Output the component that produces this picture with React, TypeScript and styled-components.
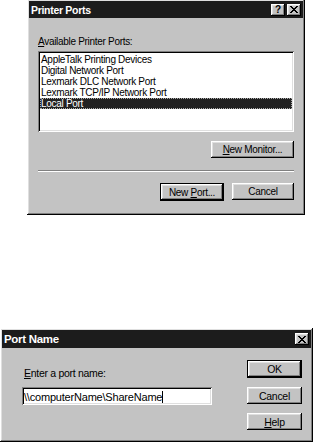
import React from 'react';
import styled, { createGlobalStyle, css } from 'styled-components';

const GlobalStyle = createGlobalStyle`
  html, body {
    margin: 0;
    padding: 0;
    background: #fff;
  }
  body {
    font-family: 'Liberation Sans', Arial, sans-serif;
    color: #000;
  }
`;

const FACE = '#c3c3c3';

const raised = css`
  box-shadow: inset -1px -1px #000, inset 1px 1px #fff, inset -2px -2px #808080,
    inset 2px 2px #dfdfdf;
`;

const sunken = css`
  box-shadow: inset 1px 1px #808080, inset -1px -1px #fff, inset 2px 2px #000,
    inset -2px -2px #dfdfdf;
`;

const Page = styled.div`
  width: 315px;
  height: 442px;
  display: flex;
  flex-direction: column;
  justify-content: space-between;
  overflow: hidden;
`;

const Window = styled.div<{ $width: number; $height: number; $left: number; $top: number }>`
  box-sizing: border-box;
  width: ${(p) => p.$width}px;
  height: ${(p) => p.$height}px;
  margin-left: ${(p) => p.$left}px;
  margin-top: ${(p) => p.$top}px;
  padding: 2px;
  background: ${FACE};
  display: flex;
  flex-direction: column;
  ${raised};
`;

const TitleBar = styled.div<{ $height: number }>`
  height: ${(p) => p.$height}px;
  background: #1c1c1c;
  display: flex;
  align-items: center;
  padding: 0 2px 0 2px;
  gap: 2px;
`;

const TitleText = styled.span<{ $size: number }>`
  flex: 1;
  color: #fff;
  font-weight: bold;
  font-size: ${(p) => p.$size}px;
  letter-spacing: -0.3px;
  white-space: nowrap;
`;

const TitleButton = styled.div`
  box-sizing: border-box;
  width: 14px;
  height: 12px;
  background: ${FACE};
  display: flex;
  align-items: center;
  justify-content: center;
  font-size: 10px;
  font-weight: bold;
  line-height: 1;
  ${raised};
`;

const Body = styled.div<{ $pad: string; $size: number }>`
  flex: 1;
  display: flex;
  flex-direction: column;
  padding: ${(p) => p.$pad};
  font-size: ${(p) => p.$size}px;
  letter-spacing: -0.3px;
`;

const Label = styled.div<{ $indent?: number }>`
  line-height: 12px;
  margin-left: ${(p) => p.$indent ?? 0}px;
  white-space: nowrap;
`;

const ListBox = styled.div`
  box-sizing: border-box;
  margin-top: 3px;
  height: 81px;
  background: #fff;
  padding: 3px 2px 2px;
  ${sunken};
`;

const ListItem = styled.div<{ $selected?: boolean }>`
  box-sizing: border-box;
  height: 11px;
  line-height: 11px;
  padding-left: 1px;
  white-space: nowrap;
  ${(p) =>
    p.$selected &&
    css`
      background: #222;
      color: #fff;
      outline: 1px dotted #aaa;
      outline-offset: -1px;
    `}
`;

const Row = styled.div<{ $top: number }>`
  display: flex;
  justify-content: flex-end;
  gap: 8px;
  margin-top: ${(p) => p.$top}px;
`;

const Button = styled.div<{ $width: number; $default?: boolean }>`
  box-sizing: border-box;
  width: ${(p) => p.$width}px;
  height: ${(p) => (p.$default ? 18 : 17)}px;
  display: flex;
  align-items: center;
  justify-content: center;
  background: ${FACE};
  white-space: pre;
  ${raised};
  ${(p) =>
    p.$default &&
    css`
      border: 1px solid #000;
    `}
`;

const Caption = styled.span`
  white-space: pre;
`;

const Groove = styled.div`
  margin-top: 12px;
  height: 1px;
  background: #808080;
  border-bottom: 1px solid #fff;
`;

const Key = styled.span`
  text-decoration: underline;
`;

const FormGrid = styled.div`
  display: grid;
  grid-template-columns: 1fr 55px;
  column-gap: 35px;
`;

const Column = styled.div<{ $top: number; $gap?: number }>`
  display: flex;
  flex-direction: column;
  gap: ${(p) => p.$gap ?? 0}px;
  padding-top: ${(p) => p.$top}px;
`;

const TextField = styled.div<{ $indent: number }>`
  box-sizing: border-box;
  margin-top: 8px;
  margin-left: ${(p) => p.$indent}px;
  height: 18px;
  background: #fff;
  padding: 2px 2px 0;
  font-size: 11px;
  line-height: 14px;
  letter-spacing: -0.2px;
  white-space: nowrap;
  display: flex;
  align-items: center;
  ${sunken};
`;

const Caret = styled.span`
  display: inline-block;
  width: 1px;
  height: 12px;
  background: #000;
`;

const CloseIcon = () => (
  <svg width="8" height="7" viewBox="0 0 8 7" shapeRendering="crispEdges">
    <path
      fill="#000"
      d="M0 0h2v1H0z M6 0h2v1H6z M1 1h2v1H1z M5 1h2v1H5z M2 2h4v1H2z M3 3h2v1H3z M2 4h4v1H2z M1 5h2v1H1z M5 5h2v1H5z M0 6h2v1H0z M6 6h2v1H6z"
    />
  </svg>
);

const ports = [
  'AppleTalk Printing Devices',
  'Digital Network Port',
  'Lexmark DLC Network Port',
  'Lexmark TCP/IP Network Port',
  'Local Port',
];

const App = () => {
  return (
    <Page>
      <GlobalStyle />
      <Window $width={278} $height={216} $left={27} $top={-1}>
        <TitleBar $height={17}>
          <TitleText $size={10.5}>Printer Ports</TitleText>
          <TitleButton>?</TitleButton>
          <TitleButton>
            <CloseIcon />
          </TitleButton>
        </TitleBar>
        <Body $pad="18px 9px 0" $size={10}>
          <Label>
            <Key>A</Key>vailable Printer Ports:
          </Label>
          <ListBox>
            {ports.map((p) => (
              <ListItem key={p} $selected={p === 'Local Port'}>
                {p}
              </ListItem>
            ))}
          </ListBox>
          <Row $top={9}>
            <Button $width={83}>
              <Caption>
                <Key>N</Key>ew Monitor...
              </Caption>
            </Button>
          </Row>
          <Groove />
          <Row $top={11}>
            <Button $width={64} $default>
              <Caption>
                New <Key>P</Key>ort...
              </Caption>
            </Button>
            <Button $width={62}>
              <Caption>Cancel</Caption>
            </Button>
          </Row>
        </Body>
      </Window>

      <Window $width={313} $height={114} $left={0} $top={0}>
        <TitleBar $height={18}>
          <TitleText $size={11.5}>Port Name</TitleText>
          <TitleButton>
            <CloseIcon />
          </TitleButton>
        </TitleBar>
        <Body $pad="12px 9px 0 0" $size={10.5}>
          <FormGrid>
            <Column $top={7}>
              <Label $indent={22}>
                <Key>E</Key>nter a port name:
              </Label>
              <TextField $indent={20}>
                \\computerName\ShareName
                <Caret />
              </TextField>
            </Column>
            <Column $top={0} $gap={9}>
              <Button $width={55} $default>
                <Caption>OK</Caption>
              </Button>
              <Button $width={55}>
                <Caption>Cancel</Caption>
              </Button>
              <Button $width={55}>
                <Caption>
                  <Key>H</Key>elp
                </Caption>
              </Button>
            </Column>
          </FormGrid>
        </Body>
      </Window>
    </Page>
  );
};

export default App;
